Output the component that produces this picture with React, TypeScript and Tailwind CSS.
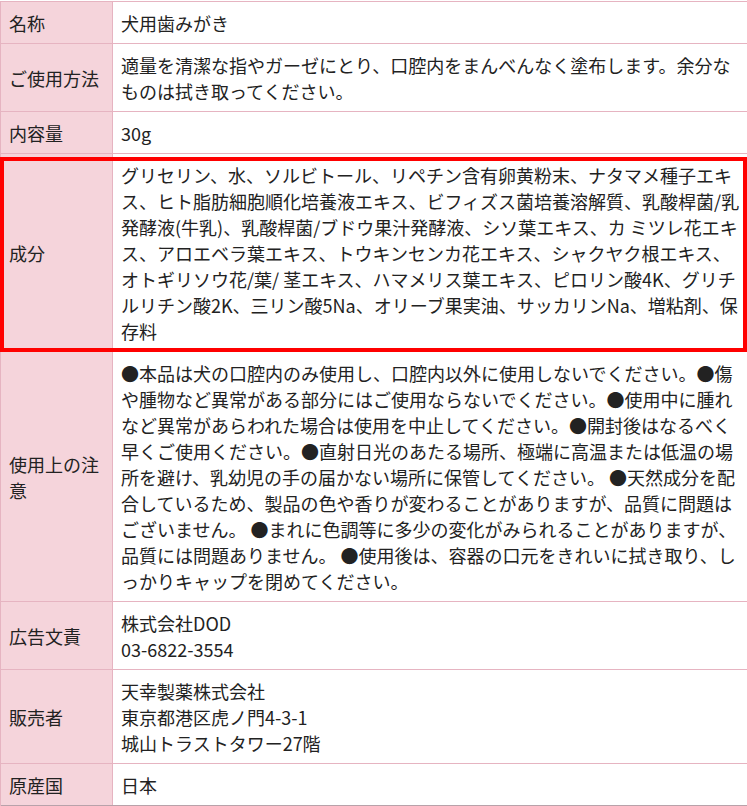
import React from 'react';

interface Row {
    label: React.ReactNode;
    value: React.ReactNode;
    highlight?: boolean;
}

// ingredient lines, broken where the original page breaks them
const ingredientLines = [
    'グリセリン、水、ソルビトール、リペチン含有卵黄粉末、ナタマメ種子エキ',
    'ス、ヒト脂肪細胞順化培養液エキス、ビフィズス菌培養溶解質、乳酸桿菌/乳',
    '発酵液(牛乳)、乳酸桿菌/ブドウ果汁発酵液、シソ葉エキス、カ ミツレ花エキ',
    'ス、アロエベラ葉エキス、トウキンセンカ花エキス、シャクヤク根エキス、',
    'オトギリソウ花/葉/ 茎エキス、ハマメリス葉エキス、ピロリン酸4K、グリチ',
    'ルリチン酸2K、三リン酸5Na、オリーブ果実油、サッカリンNa、増粘剤、保',
    '存料',
];

const rows: Row[] = [
    { label: '名称', value: '犬用歯みがき' },
    {
        label: 'ご使用方法',
        value: '適量を清潔な指やガーゼにとり、口腔内をまんべんなく塗布します。余分なものは拭き取ってください。',
    },
    { label: '内容量', value: '30g' },
    {
        label: '成分',
        highlight: true,
        value: ingredientLines.map((line, i) => (
            <div key={i} className="whitespace-nowrap">
                {line}
            </div>
        )),
    },
    {
        label: '使用上の注意',
        value: '●本品は犬の口腔内のみ使用し、口腔内以外に使用しないでください。●傷や腫物など異常がある部分にはご使用ならないでください。●使用中に腫れなど異常があらわれた場合は使用を中止してください。●開封後はなるべく早くご使用ください。●直射日光のあたる場所、極端に高温または低温の場所を避け、乳幼児の手の届かない場所に保管してください。 ●天然成分を配合しているため、製品の色や香りが変わることがありますが、品質に問題はございません。 ●まれに色調等に多少の変化がみられることがありますが、品質には問題ありません。 ●使用後は、容器の口元をきれいに拭き取り、しっかりキャップを閉めてください。',
    },
    {
        label: '広告文責',
        value: (
            <>
                株式会社DOD
                <br />
                03-6822-3554
            </>
        ),
    },
    {
        label: '販売者',
        value: (
            <>
                天幸製薬株式会社
                <br />
                東京都港区虎ノ門4-3-1
                <br />
                城山トラストタワー27階
            </>
        ),
    },
    { label: '原産国', value: '日本' },
];

export default function App() {
    return (
        <div
            className="w-[747px] h-[806px] bg-white pt-px text-[18px] leading-[26px] text-[#222] overflow-hidden"
            style={{ fontFamily: '"Noto Sans CJK JP", "Noto Sans", sans-serif' }}
        >
            <div className="border-t border-l border-[#e6b4c1]">
                {rows.map((row, i) => (
                    <div
                        key={i}
                        className={`relative flex border-b ${i === rows.length - 1 ? 'border-[#b8a2aa]' : 'border-[#e6b4c1]'}`}
                    >
                        <div className="w-[112px] shrink-0 flex items-center bg-[#f5d4db] border-r border-[#e6b4c1] px-2 py-[7.5px]">
                            {row.label}
                        </div>
                        <div className="flex-1 min-w-0 px-2 py-[7.5px] break-all">{row.value}</div>
                        {/* red highlight frame */}
                        {row.highlight && (
                            <div className="absolute left-[-1px] right-0 top-[3px] bottom-[-1px] border-4 border-[#ff0000] pointer-events-none" />
                        )}
                    </div>
                ))}
            </div>
        </div>
    );
}
